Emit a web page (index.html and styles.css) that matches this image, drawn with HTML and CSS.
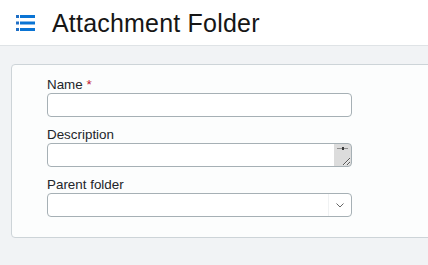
FILE: index.html
```html
<!DOCTYPE html>
<html>
<head>
<meta charset="utf-8">
<link rel="stylesheet" href="styles.css">
</head>
<body>
<header class="topbar">
  <svg class="menu-icon" width="20" height="18" viewBox="0 0 20 18">
    <rect x="0" y="1" width="3" height="3" fill="#1f6fc5"/>
    <rect x="4" y="1" width="15" height="3" fill="#0a74d4"/>
    <rect x="0" y="7.5" width="3" height="3" fill="#1f6fc5"/>
    <rect x="4" y="7.5" width="15" height="3" fill="#0a74d4"/>
    <rect x="0" y="14" width="3" height="3" fill="#1f6fc5"/>
    <rect x="4" y="14" width="15" height="3" fill="#0a74d4"/>
  </svg>
  <h1 class="title">Attachment Folder</h1>
</header>
<main class="content">
  <form class="card">
    <div class="field">
      <label class="label">Name <span class="req">*</span></label>
      <input class="control" type="text">
    </div>
    <div class="field">
      <label class="label">Description</label>
      <textarea class="control textarea" rows="1"></textarea>
    </div>
    <div class="field">
      <label class="label">Parent folder</label>
      <div class="select-wrap">
        <select class="control select"><option></option></select>
        <span class="chev">
          <svg width="8" height="5" viewBox="0 0 8 5"><path d="M0.5 0.5 L4 4 L7.5 0.5" fill="none" stroke="#666" stroke-width="1"/></svg>
        </span>
      </div>
    </div>
  </form>
</main>
</body>
</html>
```
FILE: styles.css
```css
html, body {
  margin: 0;
  padding: 0;
}
body {
  background: #f1f3f5;
  font-family: "Liberation Sans", Arial, sans-serif;
  overflow: hidden;
  width: 428px;
  height: 265px;
}
.topbar {
  height: 45px;
  background: #ffffff;
  border-bottom: 1px solid #dfe3e6;
  display: flex;
  align-items: center;
  padding-left: 16px;
  box-sizing: content-box;
}
.menu-icon {
  display: block;
  margin-right: 16px;
  margin-top: 1px;
}
.title {
  margin: 0;
  font-size: 25px;
  letter-spacing: 0.2px;
  font-weight: 400;
  color: #161616;
  line-height: 28px;
}
.content {
  padding: 18px 0 0 11px;
}
.card {
  background: #fcfdfd;
  border: 1px solid #cdd4d8;
  border-radius: 4px;
  margin-right: -20px;
  padding: 12px 0 10px 35px;
  height: 150px;
  box-sizing: content-box;
}
.field {
  margin-bottom: 10px;
  width: 305px;
}
.label {
  display: block;
  font-size: 13.4px;
  line-height: 15px;
  color: #22252a;
  margin-bottom: 1px;
}
.req {
  color: #c0152f;
}
.control {
  display: block;
  box-sizing: border-box;
  width: 305px;
  height: 24px;
  border: 1px solid #a6b0b5;
  border-radius: 4px;
  background: #fff;
  margin: 0;
  padding: 2px 6px;
  font-family: "Liberation Sans", Arial, sans-serif;
  font-size: 13px;
  outline: none;
}
.textarea {
  overflow: hidden;
  resize: vertical;
  padding-right: 22px;
  background:
    linear-gradient(#3a3a3a, #3a3a3a) no-repeat right 7px top 3px / 2px 3px,
    linear-gradient(#8e8e8e, #8e8e8e) no-repeat right 3px top 4px / 11px 1px,
    linear-gradient(to right, #ffffff calc(100% - 17px), #dcdcdc 0);
}
.select-wrap {
  position: relative;
}
.select {
  -webkit-appearance: none;
  appearance: none;
}
.chev {
  position: absolute;
  right: 1px;
  top: 1px;
  width: 22px;
  height: 22px;
  border-left: 1px solid #f0f2f3;
  display: flex;
  align-items: center;
  justify-content: center;
}
.chev svg {
  display: block;
}
```
